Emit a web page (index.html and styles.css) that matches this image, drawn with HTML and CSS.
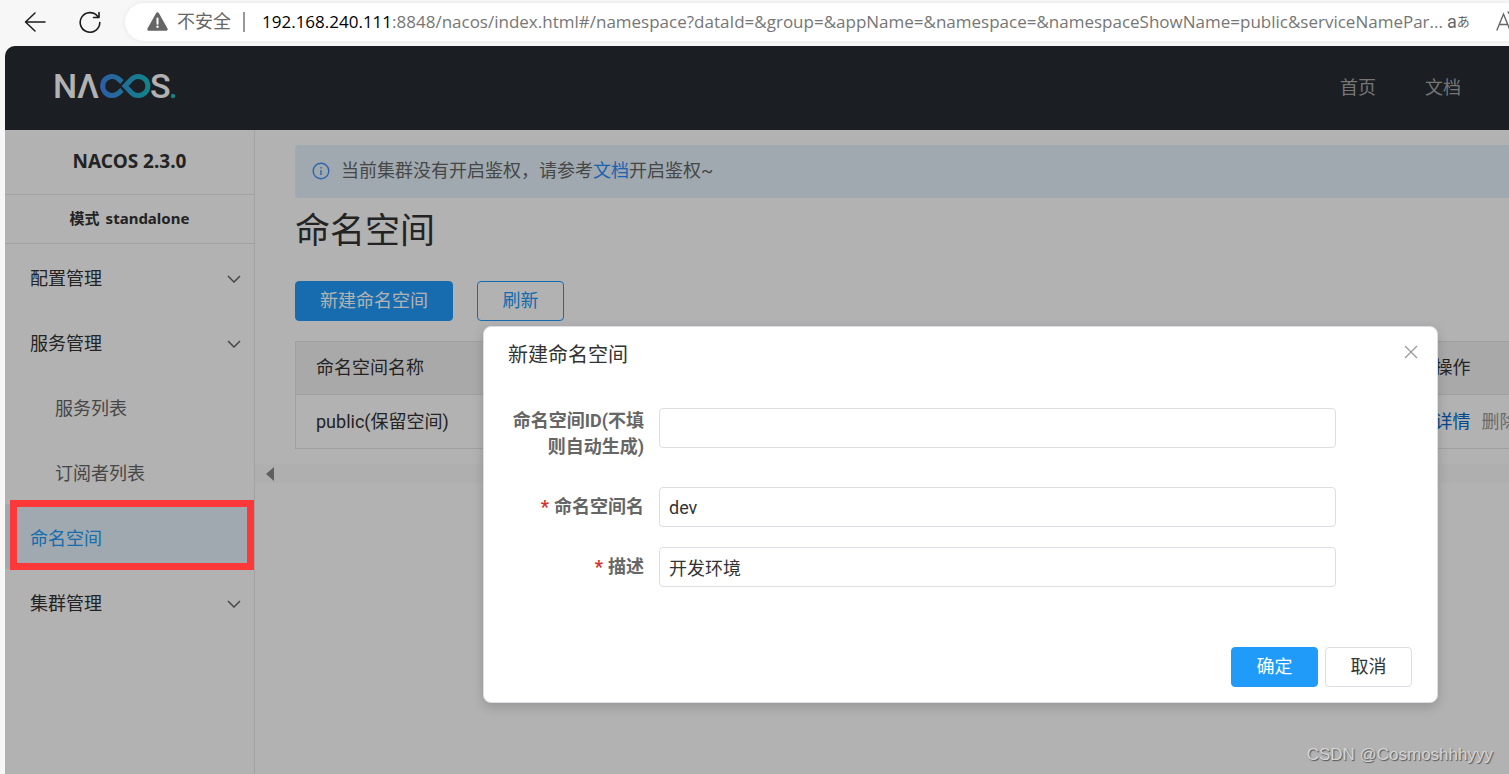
FILE: index.html
```html
<!DOCTYPE html>
<html lang="zh-CN">
<head>
<meta charset="utf-8">
<title>Nacos</title>
<link rel="stylesheet" href="styles.css">
</head>
<body>
<div class="browser">
  <div class="toolbar">
    <button class="tool" type="button" aria-label="Back">
      <svg width="22" height="22" viewBox="0 0 22 22" fill="none" stroke="#1c1c1c" stroke-width="1.5" stroke-linecap="round" stroke-linejoin="round"><path d="M21 11H1.5M11 2L1.5 11L11 20"/></svg>
    </button>
    <button class="tool" type="button" aria-label="Refresh">
      <svg width="22" height="22" viewBox="0 0 22 22" fill="none" stroke="#1c1c1c" stroke-width="1.6" stroke-linecap="round" stroke-linejoin="round"><path d="M20.8 11.5A9.8 9.8 0 1 1 18.6 5.2M20 1.5V6.5H14.5"/></svg>
    </button>
    <div class="address">
      <svg class="warn" width="21" height="19" viewBox="0 0 21 19"><path d="M10.5 1.8L19.2 17.2H1.8Z" fill="#666" stroke="#666" stroke-width="3" stroke-linejoin="round"/><path d="M10.5 6.5V11.8" stroke="#fff" stroke-width="2" stroke-linecap="round"/><circle cx="10.5" cy="14.8" r="1.2" fill="#fff"/></svg>
      <span class="insecure">不安全</span>
      <span class="bar"></span>
      <span class="url"><b>192.168.240.111</b>:8848/nacos/index.html#/namespace?dataId=&amp;group=&amp;appName=&amp;namespace=&amp;namespaceShowName=public&amp;serviceNamePar...</span>
      <button class="translate" type="button" aria-label="Translate"><span>a</span><small>あ</small></button>
      <button class="read" type="button" aria-label="Read aloud">
        <svg width="24" height="22" viewBox="0 0 24 22" fill="none" stroke="#666" stroke-width="1.4" stroke-linecap="round"><path d="M1 19L7.500 3L14 19M3.400 13.500H11.600M12 1Q14.500 3.500 14.500 7M16 0Q19 3 19 8"/></svg>
      </button>
    </div>
  </div>

  <div class="page">
    <header class="header">
      <svg class="logo" width="136" height="60" viewBox="-5 -14 136 60" role="img" aria-label="NACOS.">
        <defs><linearGradient id="loop" gradientUnits="userSpaceOnUse" x1="45" y1="0" x2="97" y2="0"><stop offset="0" stop-color="#4285f0"/><stop offset="1" stop-color="#18bfc4"/></linearGradient></defs>
        <g class="logo-text"><text x="-1" y="26">N</text><text x="23" y="26">Λ</text><text x="96" y="26">S</text></g>
        <g fill="none" stroke="url(#loop)" stroke-width="5"><path d="M68 10L64 6.500A9.500 9.500 0 1 0 64 21.500L68 18"/><path d="M71 14L77.500 7.200A9.600 9.600 0 1 1 77.500 20.800Z"/></g>
        <circle cx="119" cy="24" r="2.200" fill="#18bfc4"/>
      </svg>
      <nav class="top-links"><a href="#home">首页</a><a href="#docs">文档</a></nav>
    </header>

    <div class="body">
      <aside class="sidebar">
        <div class="version">NACOS 2.3.0</div>
        <div class="mode">模式<span>standalone</span></div>
        <ul class="menu">
          <li><a href="#config">配置管理<svg width="14" height="8" viewBox="0 0 14 8"><path d="M1 1L7 7L13 1"/></svg></a></li>
          <li><a href="#service">服务管理<svg width="14" height="8" viewBox="0 0 14 8"><path d="M1 1L7 7L13 1"/></svg></a></li>
          <li class="sub"><a href="#services">服务列表</a></li>
          <li class="sub"><a href="#subscribers">订阅者列表</a></li>
          <li class="active"><a href="#namespace">命名空间</a><span class="marker"></span></li>
          <li><a href="#cluster">集群管理<svg width="14" height="8" viewBox="0 0 14 8"><path d="M1 1L7 7L13 1"/></svg></a></li>
        </ul>
      </aside>
      <main class="main">
        <div class="notice">
          <svg width="18" height="18" viewBox="0 0 18 18" fill="none" stroke="#4490f8" stroke-width="1.400"><circle cx="9" cy="9" r="7.800"/><path d="M9 8V13M9 5V6.500"/></svg>
          <p>当前集群没有开启鉴权，请参考<a href="#auth">文档</a>开启鉴权~</p>
        </div>
        <h1>命名空间</h1>
        <div class="actions">
          <button class="btn primary" type="button">新建命名空间</button>
          <button class="btn outline" type="button">刷新</button>
        </div>
        <table class="table">
          <thead><tr><th class="name">命名空间名称</th><th>操作</th></tr></thead>
          <tbody><tr><td>public(保留空间)</td><td><a href="#detail">详情</a><a class="off" href="#delete">删除</a></td></tr></tbody>
        </table>
        <div class="band"><button class="collapse" type="button" aria-label="Collapse"></button></div>
      </main>
    </div>

    <div class="overlay">
      <section class="dialog" role="dialog" aria-labelledby="dialog-title">
        <div class="dialog-head">
          <h2 id="dialog-title">新建命名空间</h2>
          <button class="close" type="button" aria-label="Close"><svg width="14" height="14" viewBox="0 0 14 14" stroke="#999" stroke-width="1.300"><path d="M1 1L13 13M13 1L1 13"/></svg></button>
        </div>
        <form class="form">
          <div class="row tall"><label for="ns-id">命名空间ID(不填则自动生成)</label><input id="ns-id" type="text"></div>
          <div class="row"><label for="ns-name"><i>*</i>命名空间名</label><input id="ns-name" type="text" value="dev"></div>
          <div class="row"><label for="ns-desc"><i>*</i>描述</label><input id="ns-desc" type="text" value="开发环境"></div>
        </form>
        <div class="dialog-foot">
          <button class="btn primary" type="button">确定</button>
          <button class="btn" type="button">取消</button>
        </div>
      </section>
    </div>
  </div>
  <div class="watermark">CSDN @Cosmoshhhyyy</div>
</div>
</body>
</html>
```
FILE: styles.css
```css
* { box-sizing: border-box; }

body {
  margin: 0;
  background: #f7f7f7;
  color: #333;
  font: 18px/26px Roboto, "Noto Sans CJK SC", sans-serif;
}

a { color: inherit; text-decoration: none; }

button, input { font: inherit; color: inherit; }

button { padding: 0; border: 0; background: none; }

.browser {
  position: relative;
  display: flex;
  flex-direction: column;
  height: 100vh;
  overflow: hidden;
}

/* Browser toolbar */
.toolbar {
  flex: none;
  display: flex;
  align-items: center;
  height: 46px;
  padding: 0 0 3px 24px;
  gap: 33px;
}

.tool { display: flex; flex: none; }

.address {
  flex: 1;
  min-width: 0;
  display: flex;
  align-items: center;
  height: 38px;
  margin-left: -9px;
  padding-left: 22px;
  overflow: hidden;
  border-radius: 19px 0 0 19px;
  background: #fff;
  box-shadow: 0 0 4px #e4e4e4;
  color: #767676;
  white-space: nowrap;
}

.warn { flex: none; }

.insecure { margin-left: 9px; color: #666; }

.bar { flex: none; width: 2px; height: 20px; margin: 0 17px 0 12px; background: #999; }

.url { font: 17px/24px "Open Sans", sans-serif; }

.url b { color: #000; font-weight: 400; }

.translate { flex: none; display: flex; margin-left: 4px; color: #666; line-height: 20px; }

.translate small { font-size: 13px; }

.read { flex: none; display: flex; margin-left: 26px; }

/* Page */
.page {
  position: relative;
  flex: 1;
  min-height: 0;
  display: flex;
  flex-direction: column;
  margin-left: 5px;
  overflow: hidden;
  border-radius: 10px 0 0 0;
  background: #fff;
}

.header {
  flex: none;
  display: flex;
  align-items: center;
  justify-content: space-between;
  height: 84px;
  padding: 0 48px 0 44px;
  background: #272c32;
}

.logo-text { fill: #fff; font: 500 34px Roboto, sans-serif; }

.top-links { display: flex; gap: 49px; color: #aaa; }

.body { flex: 1; min-height: 0; display: flex; }

.sidebar { flex: none; width: 250px; border-right: 1px solid #e8e8e8; }

.version, .mode {
  display: flex;
  align-items: center;
  justify-content: center;
  padding-bottom: 2px;
  border-bottom: 1px solid #e8e8e8;
  font-family: "Noto Sans", "Noto Sans CJK SC", sans-serif;
  font-weight: 700;
}

.version { height: 65px; font-size: 19px; }

.mode { height: 49px; gap: 6px; font-size: 15px; }

.menu { margin: 0; padding: 0; list-style: none; }

.menu li { position: relative; }

.menu a {
  display: flex;
  align-items: center;
  justify-content: space-between;
  height: 65px;
  padding: 5px 13px 0 25px;
}

.menu svg { fill: none; stroke: #666; stroke-width: 1.5; }

.menu .sub a { padding-left: 50px; color: #666; }

.menu .active a { background: #e4f3fb; color: #209bfa; }

.marker {
  position: absolute;
  z-index: 3;
  inset: -4px 0 -1px 5px;
  border: 7px solid #fd3838;
  pointer-events: none;
}

.main { flex: 1; min-width: 0; padding: 15px 0 0 40px; overflow: hidden; }

.notice {
  display: flex;
  align-items: center;
  gap: 11px;
  height: 53px;
  padding: 0 0 1px 17px;
  border-radius: 4px 0 0 4px;
  background: #e4f3fb;
  color: #666;
}

.notice p { margin: 0; }

.notice a { color: #298cff; }

h1 { margin: 9px 0 24px; font-size: 35px; line-height: 50px; font-weight: 400; }

.actions { display: flex; gap: 24px; }

.btn {
  min-width: 87px;
  height: 40px;
  padding: 0 24px;
  border: 1px solid #dcdee3;
  border-radius: 4px;
  background: #fff;
  color: #333;
}

.btn.primary { border-color: #209bfa; background: #209bfa; color: #fff; }

.btn.outline { border-color: #209bfa; background: none; color: #209bfa; }

.table {
  width: 1585px;
  margin-top: 20px;
  table-layout: fixed;
  border: 1px solid #e6e6e6;
  border-collapse: collapse;
}

.table th, .table td {
  height: 53px;
  padding: 0 20px;
  border-bottom: 1px solid #e6e6e6;
  text-align: left;
  font-weight: 400;
}

.table td { height: 54px; }

.table th { background: #f2f2f2; }

.table .name { width: 1119px; }

.table td a { color: #06c; }

.table td .off { margin-left: 11px; color: #999; }

.band {
  display: flex;
  align-items: center;
  height: 19px;
  margin: 15px 0 0 -40px;
  padding-left: 11px;
  background: #fbfbfb;
}

.collapse { border: solid transparent; border-width: 7px 8px 7px 0; border-right-color: #888; }

/* Dialog */
.overlay {
  position: absolute;
  z-index: 2;
  inset: 0;
  display: flex;
  align-items: flex-start;
  justify-content: flex-end;
  padding: 280px 71px 0;
  background: rgba(0, 0, 0, .3);
}

.dialog {
  width: 955px;
  max-width: 100%;
  padding: 14px 25px 15px 24px;
  border: 1px solid #dcdee3;
  border-radius: 8px;
  background: #fff;
  box-shadow: 0 4px 12px rgba(0, 0, 0, .16);
}

.dialog-head { display: flex; align-items: flex-start; justify-content: space-between; }

h2 { margin: 0; font-size: 20px; line-height: 28px; font-weight: 400; }

.close { display: flex; padding: 4px 0 0; margin-right: -6px; }

.form { padding: 39px 76px 0 0; }

.row { display: flex; align-items: center; gap: 15px; margin-bottom: 20px; }

.row.tall { align-items: flex-start; margin-bottom: 27px; }

.row label { flex: none; width: 136px; color: #666; font-weight: 700; text-align: right; }

.row i { margin-right: 5px; color: #d93026; font-style: normal; }

.row input {
  flex: 1;
  min-width: 0;
  height: 40px;
  padding: 0 9px;
  border: 1px solid #dcdee3;
  border-radius: 4px;
  background: #fff;
}

.dialog-foot { display: flex; justify-content: flex-end; gap: 7px; padding-top: 40px; }

.watermark {
  position: absolute;
  z-index: 4;
  right: 16px;
  bottom: 7px;
  color: #d4d4d4;
  font: 17px/24px "Liberation Sans", sans-serif;
  text-shadow: 1px 1px 1px #555;
}
```
